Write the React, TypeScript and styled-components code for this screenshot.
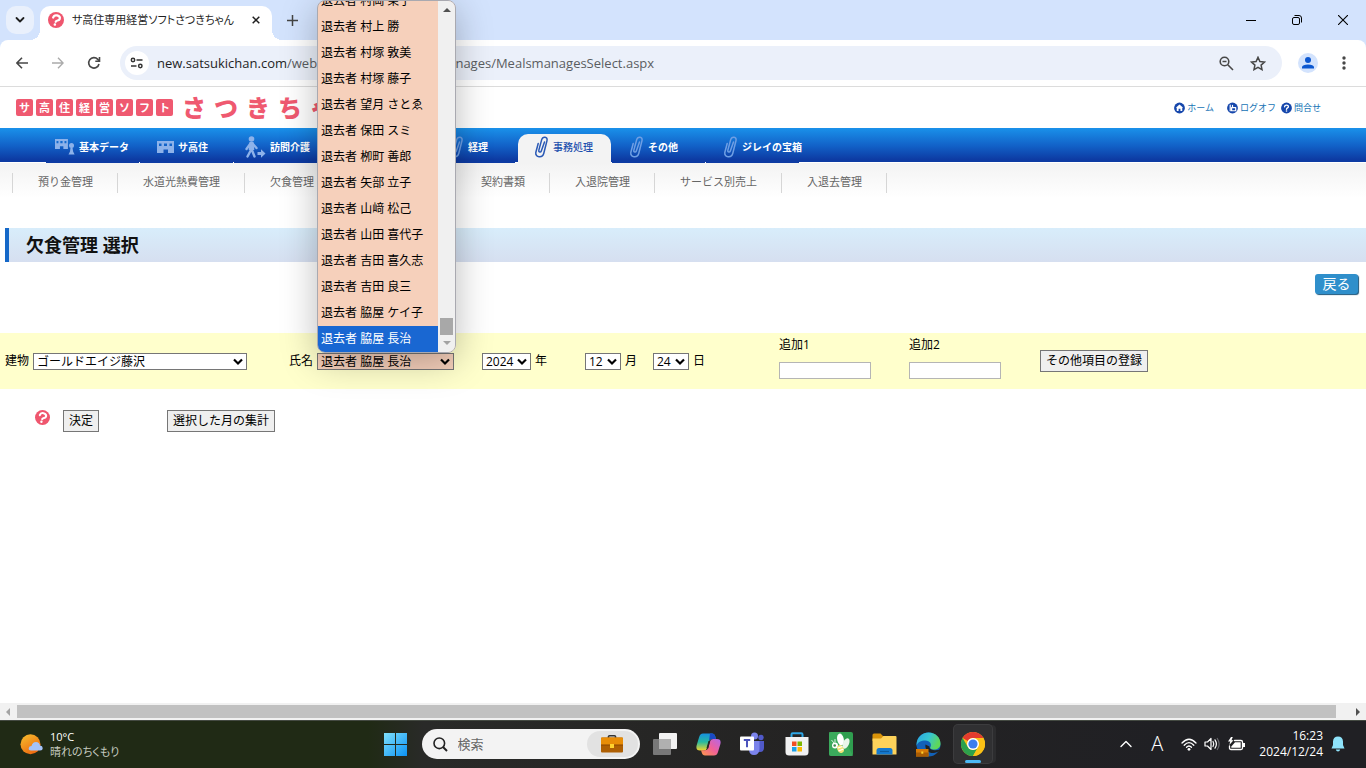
import React from "react";
import styled, { createGlobalStyle, css } from "styled-components";

const FONT = `"Open Sans", "Noto Sans CJK JP", sans-serif`;

const GlobalStyle = createGlobalStyle`
  * { box-sizing: border-box; }
  html, body { margin: 0; padding: 0; overflow: hidden; }
  body { font-family: ${FONT}; font-size: 12px; line-height: 16px; color: #000; background: #fff; }
  button, input, select { font-family: inherit; font-size: 12px; margin: 0; color: inherit; }
  a { text-decoration: none; color: inherit; }
  ul { list-style: none; margin: 0; padding: 0; }
  h1 { margin: 0; }
  svg { display: block; flex: none; }
`;

const Screen = styled.div`
  display: flex;
  flex-direction: column;
  height: 100vh;
  overflow: hidden;
`;

/* ---------- browser chrome ---------- */

const BareButton = styled.button`
  border: 0;
  padding: 0;
  background: none;
  display: flex;
  align-items: center;
  justify-content: center;
  flex: none;
`;

const TabStrip = styled.div`
  display: flex;
  align-items: flex-end;
  height: 40px;
  flex: none;
  padding-left: 6px;
  background: #d3e3fd;
`;

const TabSearch = styled(BareButton)`
  width: 28px;
  height: 28px;
  border-radius: 10px;
  background: #e9f0fc;
  margin-bottom: 6px;
`;

const BrowserTab = styled.div`
  position: relative;
  display: flex;
  align-items: center;
  width: 232px;
  height: 34px;
  margin-left: 6px;
  padding: 0 8px 6px 8px;
  background: #fff;
  border-radius: 10px 10px 0 0;
  &::before,
  &::after {
    content: "";
    position: absolute;
    bottom: 0;
    width: 10px;
    height: 10px;
  }
  &::before {
    left: -10px;
    background: radial-gradient(circle at 0 0, transparent 10px, #fff 10px);
  }
  &::after {
    right: -10px;
    background: radial-gradient(circle at 100% 0, transparent 10px, #fff 10px);
  }
`;

const TabTitle = styled.span`
  flex: 1;
  margin-left: 8px;
  white-space: nowrap;
  overflow: hidden;
  font-size: 11px;
  font-feature-settings: "palt";
  color: #1f1f1f;
`;

const TabAction = styled(BareButton)`
  width: 16px;
  height: 16px;
`;

const NewTab = styled(BareButton)`
  width: 28px;
  height: 28px;
  margin: 0 0 6px 6px;
`;

const WindowControls = styled.div`
  display: flex;
  margin-left: auto;
  align-self: stretch;
`;

const WindowButton = styled(BareButton)`
  width: 46px;
  height: 40px;
`;

const ToolbarBack = styled.div`
  background: #d3e3fd;
  flex: none;
`;

const Toolbar = styled.div`
  display: flex;
  align-items: center;
  height: 47px;
  padding: 0 4px;
  background: #fff;
  border-bottom: 1px solid #dcdcdc;
  border-radius: 8px 8px 0 0;
`;

const ToolButton = styled(BareButton)`
  width: 36px;
  height: 34px;
`;

const AddressBar = styled.div`
  display: flex;
  align-items: center;
  flex: 1;
  height: 34px;
  margin: 0 8px;
  padding: 0 16px 0 5px;
  border-radius: 17px;
  background: #ebf0fa;
  gap: 16px;
`;

const SiteInfo = styled(BareButton)`
  width: 24px;
  height: 24px;
  border-radius: 12px;
  background: #fff;
`;

const Url = styled.div`
  flex: 1;
  margin-left: -8px;
  font-size: 13px;
  color: #5a5d61;
  white-space: nowrap;
  b { font-weight: 400; color: #1f1f1f; }
`;

/* ---------- web page ---------- */

const Page = styled.main`
  flex: 1;
  min-height: 0;
  background: #fff;
`;

const Header = styled.header`
  display: flex;
  align-items: center;
  justify-content: space-between;
  height: 41px;
  padding: 0 45px 0 16px;
`;

const Logo = styled.div`
  display: flex;
  align-items: center;
  gap: 3px;
  color: #ef5970;
`;

const LogoTile = styled.span`
  width: 17px;
  height: 17px;
  border-radius: 2px;
  background: #ef5970;
  color: #fff;
  font: 700 11px/17px ${FONT};
  text-align: center;
`;

const LogoName = styled.span`
  display: flex;
  gap: 8px;
  margin-left: 6px;
  font: 900 24px/36px ${FONT};
`;

const HeaderLinks = styled.nav`
  display: flex;
  gap: 5px;
  font-size: 9px;
  color: #1573b5;
`;

const HeaderLink = styled.a<{ $apart?: boolean }>`
  display: flex;
  align-items: center;
  gap: 2px;
  margin-right: ${(p) => (p.$apart ? 8 : 0)}px;
`;

const MainNav = styled.nav`
  display: flex;
  height: 35px;
  padding-left: 46px;
  background: linear-gradient(#1a91ea, #1262c8 50%, #0d3ba3 90%);
  box-shadow: inset 0 -1px #fff;
`;

const NavItem = styled.a<{ $inset: number; $active?: boolean }>`
  display: flex;
  align-items: center;
  gap: 4px;
  width: 93px;
  margin-right: 1px;
  flex: none;
  padding: 4px 0 0 ${(p) => p.$inset}px;
  border-bottom: 1px solid #0d3ba3;
  font-size: 10px;
  font-weight: 700;
  color: #fff;
  white-space: nowrap;
  ${(p) =>
    p.$active &&
    css`
      margin-top: 6px;
      margin-left: 2px;
      padding-top: 0;
      padding-bottom: 2px;
      background: #f3f3f3;
      border-color: #f3f3f3;
      border-radius: 10px 10px 0 0;
      color: #1c4fae;
      font-weight: 500;
    `}
`;

const SubNav = styled.nav`
  display: flex;
  height: 35px;
  padding: 10px 0 5px 12px;
  background: linear-gradient(#f3f3f3, #fff);
`;

const SubItem = styled.a<{ $blank?: boolean }>`
  border-left: 1px solid #d6d6d6;
  padding: 0 24px 0 25px;
  font-size: 11px;
  line-height: 18px;
  color: #666;
  white-space: nowrap;
  min-width: ${(p) => (p.$blank ? "117px" : "0")};
  &:last-child { border-right: 1px solid #d6d6d6; }
`;

const Title = styled.h1`
  margin: 30px 0 0 5px;
  height: 34px;
  padding-left: 17px;
  border-left: 4px solid #1568c8;
  background: linear-gradient(#d8edfb, #d6dff0);
  font-size: 18px;
  line-height: 34px;
  color: #111;
`;

const BackRow = styled.div`
  display: flex;
  justify-content: flex-end;
  padding: 12px 8px 39px;
`;

const BackButton = styled.button`
  width: 43px;
  height: 20px;
  padding: 0;
  border: 0;
  border-radius: 3px;
  background: #2f8fcb;
  box-shadow: 1px 1px 1px #1b567c;
  color: #fff;
  font-size: 14px;
  line-height: 18px;
`;

const FilterBar = styled.form`
  display: grid;
  grid-template-columns: 284px 193px 103px 68px 126px 130px 131px auto;
  align-items: center;
  height: 56px;
  padding-left: 5px;
  background: #ffffcc;
`;

const Field = styled.div`
  position: relative;
  display: flex;
  align-items: center;
  gap: 4px;
`;

const StackField = styled.div`
  display: flex;
  flex-direction: column;
  align-items: flex-start;
  gap: 9px;
  padding-bottom: 6px;
`;

const SelectBox = styled.span<{ $w: number }>`
  position: relative;
  width: ${(p) => p.$w}px;
  flex: none;
  svg {
    position: absolute;
    right: 4px;
    top: 5px;
    pointer-events: none;
  }
`;

const SelectControl = styled.select<{ $tint?: boolean }>`
  appearance: none;
  display: block;
  width: 100%;
  height: 17px;
  padding: 0 0 0 3px;
  border: 1px solid #767676;
  border-radius: 0;
  background-color: ${(p) => (p.$tint ? "#f6d0bb" : "#fff")};
  line-height: 15px;
`;

const TextInput = styled.input`
  width: 92px;
  height: 17px;
  border: 1px solid #b5b5b5;
  background: #fff;
`;

const PlainButton = styled.button`
  height: 22px;
  padding: 0 5px;
  border: 1px solid #767676;
  border-radius: 0;
  background: #efefef;
  line-height: 18px;
  white-space: nowrap;
  justify-self: start;
`;

const Actions = styled.div`
  display: flex;
  padding: 21px 0 0 35px;
  align-items: flex-start;
`;

const HelpLink = styled.a`
  margin-right: 13px;
`;

const Gap = styled.div`
  width: 68px;
`;

/* anchor at the top left corner of the name field */
const PopupAnchor = styled.div`
  position: absolute;
  left: 0;
  top: 0;
`;

/* open option list lies above the page, ending at the field's top edge */
const Popup = styled.div`
  position: absolute;
  left: 28px;
  bottom: 0;
  z-index: 5;
  display: flex;
  width: 139px;
  height: 353px;
  border: 1px solid #a9a9b0;
  border-radius: 8px;
  overflow: hidden;
  background: #f6d0bb;
`;

const PopupShadow = styled.div`
  position: absolute;
  left: 28px;
  bottom: 0;
  z-index: 4;
  width: 139px;
  height: 353px;
  border-radius: 8px;
  box-shadow: 0 8px 36px rgba(0, 0, 0, 0.27);
  pointer-events: none;
`;

const OptionList = styled.ul`
  flex: 1;
  display: flex;
  flex-direction: column;
  justify-content: flex-end;
  overflow: hidden;
`;

const OptionRow = styled.li<{ $on?: boolean }>`
  flex: none;
  height: 26px;
  padding-left: 3px;
  line-height: 26px;
  white-space: nowrap;
  color: ${(p) => (p.$on ? "#fff" : "#000")};
  background: ${(p) => (p.$on ? "#1967d2" : "transparent")};
`;

const PopupScroll = styled.div`
  display: flex;
  flex-direction: column;
  align-items: center;
  width: 17px;
  padding: 5px 0;
  background: #f0f0f0;
`;

const PopupThumb = styled.div`
  width: 13px;
  height: 17px;
  margin: auto 0 4px;
  background: #a8a8a8;
`;

const PageScroll = styled.div`
  display: grid;
  grid-template-columns: 17px 1fr 30px;
  align-items: center;
  flex: none;
  height: 17px;
  background: #f1f1f1;
`;

const PageThumb = styled.div`
  height: 13px;
  background: #c1c1c1;
`;

const ArrowCell = styled.div<{ $end?: boolean }>`
  display: flex;
  justify-content: ${(p) => (p.$end ? "flex-end" : "center")};
  padding-right: ${(p) => (p.$end ? 4 : 0)}px;
`;

/* ---------- task bar ---------- */

const Taskbar = styled.footer`
  display: grid;
  grid-template-columns: 1fr auto 1fr;
  align-items: center;
  flex: none;
  height: 48px;
  box-shadow: inset 0 1px #444a42;
  background: linear-gradient(90deg, #202a15 0, #202a15 27%, #292a28 31%, #242323 60%, #202024 85%);
  color: #fff;
`;

const Weather = styled.div`
  display: flex;
  align-items: center;
  gap: 7px;
  padding-left: 20px;
  font-size: 11px;
  line-height: 15px;
  font-feature-settings: "palt";
  small { display: block; font-size: 11px; color: #c6cbc0; }
`;

const Apps = styled.div`
  display: flex;
  align-items: center;
  margin-left: 2px;
`;

const AppButton = styled(BareButton)<{ $active?: boolean }>`
  position: relative;
  width: 44px;
  height: 44px;
  ${(p) =>
    p.$active &&
    css`
      width: 38px;
      height: 38px;
      margin: 0 3px;
      border-radius: 4px;
      background: #303032;
      box-shadow: 0 0 0 1px #3c3c3e, 4px 0 0 0 #2c2c2e;
      &::after {
        content: "";
        position: absolute;
        bottom: 0;
        width: 16px;
        height: 3px;
        border-radius: 2px;
        background: #4cb9f5;
      }
    `}
`;

const SearchBox = styled.label`
  display: flex;
  align-items: center;
  width: 218px;
  height: 30px;
  margin: 0 3px 0 4px;
  padding: 0 2px 0 11px;
  border-radius: 15px;
  background: #f3f3f3;
  gap: 10px;
`;

const SearchInput = styled.input`
  flex: 1;
  min-width: 0;
  border: 0;
  padding: 0;
  background: none;
  font-size: 13px;
  outline: none;
  &::placeholder { color: #666; opacity: 1; }
`;

const SearchBadge = styled.span`
  display: flex;
  align-items: center;
  justify-content: center;
  width: 51px;
  height: 26px;
  border-radius: 13px;
  background: #e2e2e2;
`;

const Tray = styled.div`
  display: flex;
  align-items: center;
  justify-content: flex-end;
  padding-right: 21px;
`;

const TrayIcons = styled.div`
  display: flex;
  align-items: center;
  gap: 7px;
  margin: 0 14px 0 18px;
`;

const Ime = styled.span`
  margin-left: 19px;
  font: 300 20px/24px ${FONT};
`;

const Clock = styled.time`
  margin-right: 8px;
  text-align: right;
  font-size: 12px;
  line-height: 16px;
`;

/* ---------- drawings ---------- */

const stroke = { fill: "none", strokeLinecap: "round", strokeLinejoin: "round" } as const;

const HelpIcon = ({ size = 16 }: { size?: number }) => (
  <svg width={size} height={size} viewBox="0 0 16 16">
    <circle cx="8" cy="8" r="8" fill="#ef566e" />
    <g transform="rotate(14 8 8)">
      <path d="M4.600 6.300C4.800 4.200 6.300 3.300 8 3.300c1.900 0 3.400.9 3.400 2.700C11.400 8.200 8.300 8 8.100 9.800" {...stroke} stroke="#fff" strokeWidth="2.200" />
      <circle cx="8" cy="12.700" r="1.300" fill="#fff" />
    </g>
  </svg>
);

const Triangle = ({ dir, color }: { dir: "up" | "down" | "left" | "right"; color: string }) => {
  const d = { up: "M0 6L4 2L8 6Z", down: "M0 2H8L4 6Z", left: "M5 0V8L1 4Z", right: "M2 0V8L6 4Z" }[dir];
  return (
    <svg width="8" height="8" viewBox="0 0 8 8">
      <path d={d} fill={color} />
    </svg>
  );
};

const ClipIcon = ({ color }: { color: string }) => (
  <svg width="15" height="24" viewBox="0 0 15 24">
    <path
      d="M10.500 7L7.300 16c-.6 1.800-2.900 1.200-2.500-.6L7.700 4.600C8.800 1 14 1.600 13 5.600L9.800 18.300C8.600 23.500 1 22.600 1.800 17.500L4.200 8.500"
      {...stroke}
      stroke={color}
      strokeWidth="1.500"
    />
  </svg>
);

const BuildingShape = () => (
  <path d="M0 0H17V12H11V8.500H6.500V12H0ZM2 2.500V5H4.500V2.500ZM7 2.500V5H10V2.500ZM12.500 2.500V5H15V2.500Z" fill="#8db2ea" fillRule="evenodd" />
);

const BuildingIcon = () => (
  <svg width="17" height="12" viewBox="0 0 17 12">
    <BuildingShape />
  </svg>
);

const BuildingPersonIcon = () => (
  <svg width="20" height="16" viewBox="0 0 20 16">
    <g transform="scale(.76 .84)">
      <BuildingShape />
    </g>
    <circle cx="16.500" cy="6.500" r="2.500" fill="#8db2ea" />
    <path d="M15.500 8.500h2l.6 4 1.500 3H13.500l1.500-3Z" fill="#8db2ea" />
  </svg>
);

const WalkerIcon = () => (
  <svg width="21" height="22" viewBox="0 0 21 22">
    <circle cx="6.500" cy="3" r="2.800" fill="#8db2ea" />
    <path d="M6.500 7V13L9.500 20.500M6.500 13L2.500 20.500M5.500 7.500L1.500 13M7.500 7.500L11.500 12" {...stroke} stroke="#8db2ea" strokeWidth="2.400" />
    <path d="M4.500 6h4l.8 8H3.700Z" fill="#8db2ea" />
    <path d="M12.500 16H16V13.300L20.500 17.500L16 21.700V19H12.500Z" fill="#8db2ea" />
  </svg>
);

const LinkIcon = ({ kind }: { kind: "home" | "logoff" | "help" }) => (
  <svg width="11" height="12" viewBox="0 0 12 12">
    <circle cx="6" cy="6" r="5.900" fill="#1647ac" />
    {kind === "home" && <path d="M6 2.200L10 5.800H9V9.300H7V6.800H5V9.300H3V5.800H2Z" fill="#fff" />}
    {kind === "logoff" && (
      <path d="M3.500 2.800V9M6 3.200V5.500M5 5.500H9.500V9H5Z" {...stroke} stroke="#fff" strokeWidth="1.300" />
    )}
    {kind === "help" && (
      <>
        <path d="M3.900 4.700C4 2.200 8.100 2.200 8.100 4.600C8.100 6 6 5.900 6 7.400" {...stroke} stroke="#fff" strokeWidth="1.500" />
        <circle cx="6" cy="9.300" r=".9" fill="#fff" />
      </>
    )}
  </svg>
);

const Briefcase = () => (
  <svg width="22" height="18" viewBox="0 0 22 18">
    <path d="M7.500 3V1.500Q7.500.8 8.500.8H13.500Q14.500.8 14.500 1.500V3" fill="none" stroke="#333" strokeWidth="1.600" />
    <rect y="2.500" width="22" height="15" rx="1" fill="#ae5f03" />
    <path d="M0 3.500Q0 2.500 1 2.500H21Q22 2.500 22 3.500V10H0Z" fill="#e88d07" />
    <rect y="9.500" width="22" height="1" fill="#8a4700" />
    <rect x="9" y="9" width="4" height="4" fill="#ffd22e" />
  </svg>
);

const TeamsIcon = () => (
  <svg width="25" height="24" viewBox="0 0 25 24">
    <circle cx="21" cy="5.500" r="2.700" fill="#5059c9" />
    <circle cx="14.500" cy="4" r="3.500" fill="#7b83eb" />
    <path d="M17 9H24V16Q24 20 20 20H17Z" fill="#5059c9" />
    <path d="M9 9H19.500V17Q19 23 14 23Q9 23 9 17Z" fill="#7b83eb" />
    <rect y="4.500" width="14" height="14" rx="1" fill="#fff" />
    <path d="M3.800 8H10.200M7 8V15.300" stroke="#4b53bc" strokeWidth="2" fill="none" />
  </svg>
);

const CopilotIcon = () => (
  <svg width="25" height="23" viewBox="0 0 25 23">
    <defs>
      <linearGradient id="cpA" x1="0" y1="0" x2="0" y2="1">
        <stop offset="0" stopColor="#1690e0" />
        <stop offset=".5" stopColor="#27b9a0" />
        <stop offset="1" stopColor="#f4d42c" />
      </linearGradient>
      <linearGradient id="cpB" x1="1" y1="0" x2="0" y2="1">
        <stop offset="0" stopColor="#b467e8" />
        <stop offset=".5" stopColor="#f0609a" />
        <stop offset="1" stopColor="#ff9a45" />
      </linearGradient>
    </defs>
    <path d="M7 .5H16Q18.500 .5 19.300 3.500L20 6H16Q13.500 6 12.800 8.500L11 15Q10.300 17.500 8 17.500H4Q-.5 17.500 .6 12.500L3 4.500Q4 .5 7 .5Z" fill="url(#cpA)" />
    <path d="M14 .5H16Q18.500 .5 19.300 3.500L20 6H16Q14 6 13 8Z" fill="#1b49c4" />
    <path d="M18 22.500H9Q6.500 22.500 5.700 19.500L5 17.300H9Q11.500 17.300 12.200 15L14 8.500Q14.700 6 17 6H21Q25.500 6 24.400 11L22 19Q21 22.500 18 22.500Z" fill="url(#cpB)" />
    <path d="M10.500 15L12.500 8H14.200L12.200 15.500Z" fill="#262625" />
  </svg>
);

const StoreIcon = () => (
  <svg width="24" height="24" viewBox="0 0 24 24">
    <path d="M6.500 6V2.500Q6.500 1.300 7.700 1.300H16.300Q17.500 1.300 17.500 2.500V6" fill="none" stroke="#2ea7e6" strokeWidth="2" />
    <path d="M.5 5H23.500V20Q23.500 23.500 20 23.500H4Q.5 23.500 .5 20Z" fill="#f1f1f2" />
    <path d="M7 9.500H11.500V14H7Z" fill="#f04e23" />
    <path d="M12.500 9.500H17V14H12.500Z" fill="#7db700" />
    <path d="M7 15H11.500V19.500H7Z" fill="#1a9fe8" />
    <path d="M12.500 15H17V19.500H12.500Z" fill="#fdb900" />
  </svg>
);

const BeeIcon = () => (
  <svg width="24" height="24" viewBox="0 0 24 24">
    <rect width="24" height="24" rx="2" fill="#2f9e4f" />
    <path d="M0 0H12L24 24H2Q0 24 0 22Z" fill="#45b366" opacity=".6" />
    <ellipse cx="11.500" cy="7.500" rx="3.300" ry="6" fill="#fff" transform="rotate(-12 11.500 7.500)" />
    <ellipse cx="17" cy="11.500" rx="3" ry="5.500" fill="#e9f5ea" transform="rotate(25 17 11.500)" />
    <circle cx="6" cy="13.500" r="3" fill="#fff" />
    <circle cx="5.700" cy="13.500" r="1.300" fill="#3a8a4c" />
    <ellipse cx="11.500" cy="17" rx="3.200" ry="4" fill="#f6e27a" transform="rotate(-25 11.500 17)" />
    <path d="M8.800 16L13.500 14.500M9.500 19L14.500 17" stroke="#fff" strokeWidth="1.300" />
    <path d="M2.500 8L5 11M6 7V10.500" stroke="#d8f0dc" strokeWidth="1" />
  </svg>
);

const FolderIcon = () => (
  <svg width="25" height="22" viewBox="0 0 25 22">
    <path d="M.5 2Q.5 .5 2 .5H8.500L11 3H15V8H.5Z" fill="#d99309" />
    <path d="M.5 5.500H9L11.500 3H23.500Q24.500 3 24.500 4V21.500H.5Z" fill="#fdd25a" />
    <path d="M4.500 21.500V17.500Q4.500 15 7 15H18Q20.500 15 20.500 17.500V21.500Z" fill="#1479cf" />
    <path d="M8 18.500H17" stroke="#0c5a9f" strokeWidth="1.200" />
  </svg>
);

const EdgeIcon = () => (
  <svg width="25" height="25" viewBox="0 0 25 25">
    <defs>
      <linearGradient id="edA" x1="0" y1="0" x2="1" y2=".4">
        <stop offset="0" stopColor="#2aa5e2" />
        <stop offset=".55" stopColor="#37c6d0" />
        <stop offset="1" stopColor="#5fd758" />
      </linearGradient>
    </defs>
    <circle cx="12.500" cy="12.500" r="12" fill="#1261b8" />
    <path d="M.6 11.500C1.500 4.500 6.500 .5 12.500 .5C20 .5 24.500 6 24.500 11.500C24.500 15.500 21.500 17.500 18 17.500C15 17.500 13.500 16.500 14.500 15C16 12.500 14 8.500 9.500 8.500C5 8.500 1.500 10 .6 14Z" fill="url(#edA)" />
    <path d="M9.500 12.500C8.500 18 13 21.500 18 21C20.500 20.700 23 19.500 24 17.500C20 19 13 18.500 13.500 14.500Z" fill="#202222" />
    <path d="M0 17H12.500V24.500H0Z" fill="#d67a06" />
    <path d="M0 20.500H12.500V24.500H0Z" fill="#a85c04" />
    <rect x="5.300" y="19.500" width="2" height="2.200" fill="#ffd22e" />
  </svg>
);

const ChromeIcon = () => (
  <svg width="24" height="24" viewBox="0 0 24 24">
    <circle cx="12" cy="12" r="12" fill="#fbc116" />
    <path d="M1.600 6A12 12 0 0 1 22.400 6H12A6 6 0 0 0 6.800 9Z" fill="#e33b2e" />
    <path d="M1.600 6A12 12 0 0 0 12 24L17.200 15A6 6 0 0 1 6.800 15Z" fill="#2da14c" />
    <path d="M12 6H22.400A12 12 0 0 1 12 24L17.200 15A6 6 0 0 0 12 6Z" fill="#fbc116" />
    <circle cx="12" cy="12" r="6" fill="#fff" />
    <circle cx="12" cy="12" r="4.600" fill="#3b7ded" />
  </svg>
);

const WindowsIcon = () => (
  <svg width="23" height="23" viewBox="0 0 23 23">
    <defs>
      <linearGradient id="win" x1="0" y1="0" x2="1" y2="1">
        <stop offset="0" stopColor="#7fe0fb" />
        <stop offset="1" stopColor="#0b92f5" />
      </linearGradient>
    </defs>
    <path d="M0 0H11V11H0ZM12 0H23V11H12ZM0 12H11V23H0ZM12 12H23V23H12Z" fill="url(#win)" />
  </svg>
);

const TaskViewIcon = () => (
  <svg width="24" height="22" viewBox="0 0 24 22">
    <rect x="6" width="18" height="16" rx="1" fill="#f2f2f2" />
    <rect y="6" width="18" height="16" rx="1" fill="#787878" />
    <rect x="6" y="6" width="12" height="10" fill="#b0b0b0" />
  </svg>
);

const WeatherIcon = () => (
  <svg width="23" height="21" viewBox="0 0 23 21">
    <defs>
      <linearGradient id="sun" x1="0" y1="0" x2=".6" y2="1">
        <stop offset="0" stopColor="#f6c02f" />
        <stop offset="1" stopColor="#ee6a10" />
      </linearGradient>
    </defs>
    <circle cx="10.500" cy="10.300" r="10" fill="url(#sun)" />
    <path d="M11 16.500Q8.500 16.500 8.700 14.300Q9 12 11.500 12Q12.500 8 16 8Q19.500 8 20 11.500Q22.700 11.800 22.700 14Q22.700 16.500 20 16.500Z" fill="#a5c3fa" />
  </svg>
);

/* ---------- data ---------- */

const residents = [
  "村岡 榮子", "村上 勝", "村塚 敦美", "村塚 藤子", "望月 さとゑ", "保田 スミ", "栁町 善郎",
  "矢部 立子", "山﨑 松己", "山田 喜代子", "吉田 喜久志", "吉田 良三", "脇屋 ケイ子", "脇屋 長治",
];

const navFaded = "#6f9fe4";

const navItems: { label: string; inset: number; icon?: React.ReactNode; active?: boolean }[] = [
  { label: "基本データ", inset: 9, icon: <BuildingPersonIcon /> },
  { label: "サ高住", inset: 17, icon: <BuildingIcon /> },
  { label: "訪問介護", inset: 11, icon: <WalkerIcon /> },
  { label: "", inset: 0 },
  { label: "経理", inset: 27, icon: <ClipIcon color={navFaded} /> },
  { label: "事務処理", inset: 16, icon: <ClipIcon color="#2a59b5" />, active: true },
  { label: "その他", inset: 17, icon: <ClipIcon color={navFaded} /> },
  { label: "ジレイの宝箱", inset: 17, icon: <ClipIcon color={navFaded} /> },
];

const subItems = ["預り金管理", "水道光熱費管理", "欠食管理", "", "契約書類", "入退院管理", "サービス別売上", "入退去管理"];

function BrowserChrome() {
  return (
    <>
      <TabStrip>
        <TabSearch aria-label="タブを検索">
          <svg width="10" height="10" viewBox="0 0 10 10"><path d="M1.500 3L5 6.500L8.500 3" {...stroke} stroke="#1f1f1f" strokeWidth="1.800" /></svg>
        </TabSearch>
        <BrowserTab>
          <HelpIcon />
          <TabTitle>サ高住専用経営ソフトさつきちゃん</TabTitle>
          <TabAction aria-label="タブを閉じる">
            <svg width="8" height="8" viewBox="0 0 8 8"><path d="M.7.7L7.300 7.300M7.300.7L.7 7.300" stroke="#1f1f1f" strokeWidth="1.500" /></svg>
          </TabAction>
        </BrowserTab>
        <NewTab aria-label="新しいタブ">
          <svg width="11" height="11" viewBox="0 0 11 11"><path d="M5.500 0V11M0 5.500H11" stroke="#444" strokeWidth="1.500" /></svg>
        </NewTab>
        <WindowControls>
          <WindowButton aria-label="最小化">
            <svg width="10" height="11" viewBox="0 0 10 11"><path d="M0 5.500H10" stroke="#000" /></svg>
          </WindowButton>
          <WindowButton aria-label="元に戻す">
            <svg width="10" height="10" viewBox="0 0 10 10"><rect x=".5" y="2.500" width="7" height="7" rx="1.500" fill="none" stroke="#000" /><path d="M2.500.5H7Q9.500.5 9.500 3V7.500" fill="none" stroke="#000" /></svg>
          </WindowButton>
          <WindowButton aria-label="閉じる">
            <svg width="10" height="10" viewBox="0 0 10 10"><path d="M0 0L10 10M10 0L0 10" stroke="#000" strokeWidth="1.100" /></svg>
          </WindowButton>
        </WindowControls>
      </TabStrip>
      <ToolbarBack>
        <Toolbar>
          <ToolButton aria-label="戻る">
            <svg width="12" height="12" viewBox="0 0 12 12"><path d="M12 6H1M6 .8L.9 6L6 11.200" fill="none" stroke="#474747" strokeWidth="1.600" /></svg>
          </ToolButton>
          <ToolButton aria-label="進む">
            <svg width="12" height="12" viewBox="0 0 12 12"><path d="M0 6H11M6 .8L11.100 6L6 11.200" fill="none" stroke="#ababab" strokeWidth="1.400" /></svg>
          </ToolButton>
          <ToolButton aria-label="再読み込み">
            <svg width="14" height="14" viewBox="0 0 14 14"><path d="M12 8A5.200 5.200 0 1 1 10.800 3.400L12 4.700" fill="none" stroke="#474747" strokeWidth="1.600" /><path d="M12.500 1V5.200H8.300" fill="none" stroke="#474747" strokeWidth="1.600" /></svg>
          </ToolButton>
          <AddressBar>
            <SiteInfo aria-label="サイト情報">
              <svg width="14" height="12" viewBox="0 0 14 12">
                <g fill="none" stroke="#333" strokeWidth="1.500"><circle cx="3" cy="3" r="1.700" /><path d="M6.500 3H12.500M1 9H6.500" /><circle cx="10.300" cy="9" r="1.700" /></g>
              </svg>
            </SiteInfo>
            <Url><b>new.satsukichan.com</b>/web/OfficeWorks/Mealsmanages/MealsmanagesSelect.aspx</Url>
            <BareButton aria-label="ズーム">
              <svg width="15" height="15" viewBox="0 0 15 15"><g fill="none" stroke="#474747" strokeWidth="1.600"><circle cx="5.500" cy="5.500" r="4.300" /><path d="M8.800 8.800L14 14M3.500 5.500H7.500" /></g></svg>
            </BareButton>
            <BareButton aria-label="ブックマーク">
              <svg width="16" height="15" viewBox="0 0 16 15"><path d="M8 1.300L9.900 5.500L14.500 6L11.100 9.100L12 13.600L8 11.300L4 13.600L4.900 9.100L1.500 6L6.100 5.500Z" fill="none" stroke="#474747" strokeWidth="1.500" /></svg>
            </BareButton>
          </AddressBar>
          <ToolButton aria-label="プロフィール">
            <svg width="20" height="20" viewBox="0 0 20 20"><circle cx="10" cy="10" r="10" fill="#d3e3fd" /><circle cx="10" cy="7" r="3" fill="#0b57d0" /><path d="M4 15.500V14Q4.500 11.500 10 11.500T16 14V15.500Z" fill="#0b57d0" /></svg>
          </ToolButton>
          <ToolButton aria-label="メニュー">
            <svg width="4" height="14" viewBox="0 0 4 14"><g fill="#474747"><circle cx="2" cy="2" r="1.700" /><circle cx="2" cy="7" r="1.700" /><circle cx="2" cy="12" r="1.700" /></g></svg>
          </ToolButton>
        </Toolbar>
      </ToolbarBack>
    </>
  );
}

function Select({ id, width, tint, value }: { id: string; width: number; tint?: boolean; value: string }) {
  return (
    <SelectBox $w={width}>
      <SelectControl id={id} $tint={tint}><option>{value}</option></SelectControl>
      <svg width="10" height="8" viewBox="0 0 10 8"><path d="M1 1.500L5 5.500L9 1.500" fill="none" stroke="#000" strokeWidth="2.200" /></svg>
    </SelectBox>
  );
}

function Filters() {
  const last = residents.length - 1;
  return (
    <FilterBar>
      <Field>
        <label htmlFor="building">建物</label>
        <Select id="building" width={214} value="ゴールドエイジ藤沢" />
      </Field>
      <Field>
        <label htmlFor="resident">氏名</label>
        <Select id="resident" width={137} tint value="退去者 脇屋 長治" />
        <PopupAnchor>
          <PopupShadow />
          <Popup>
            <OptionList role="listbox" aria-label="氏名">
              {residents.map((name, i) => (
                <OptionRow key={name} role="option" aria-selected={i === last} $on={i === last}>
                  退去者 {name}
                </OptionRow>
              ))}
            </OptionList>
            <PopupScroll>
              <Triangle dir="up" color="#505050" />
              <PopupThumb />
              <Triangle dir="down" color="#a3a3a3" />
            </PopupScroll>
          </Popup>
        </PopupAnchor>
      </Field>
      <Field>
        <Select id="year" width={49} value="2024" />
        <label htmlFor="year">年</label>
      </Field>
      <Field>
        <Select id="month" width={36} value="12" />
        <label htmlFor="month">月</label>
      </Field>
      <Field>
        <Select id="day" width={36} value="24" />
        <label htmlFor="day">日</label>
      </Field>
      <StackField>
        <label htmlFor="extra1">追加1</label>
        <TextInput id="extra1" />
      </StackField>
      <StackField>
        <label htmlFor="extra2">追加2</label>
        <TextInput id="extra2" />
      </StackField>
      <PlainButton type="button">その他項目の登録</PlainButton>
    </FilterBar>
  );
}

function SystemBar() {
  return (
    <Taskbar>
      <Weather>
        <WeatherIcon />
        <div>10°C<small>晴れのちくもり</small></div>
      </Weather>
      <Apps>
        <AppButton aria-label="スタート"><WindowsIcon /></AppButton>
        <SearchBox>
          <svg width="15" height="15" viewBox="0 0 15 15"><circle cx="6.300" cy="6.300" r="5.300" fill="none" stroke="#222" strokeWidth="1.600" /><path d="M10 10L14 14" stroke="#222" strokeWidth="2" /></svg>
          <SearchInput aria-label="検索" placeholder="検索" />
          <SearchBadge><Briefcase /></SearchBadge>
        </SearchBox>
        <AppButton aria-label="タスク ビュー"><TaskViewIcon /></AppButton>
        <AppButton aria-label="Copilot"><CopilotIcon /></AppButton>
        <AppButton aria-label="Teams"><TeamsIcon /></AppButton>
        <AppButton aria-label="Store"><StoreIcon /></AppButton>
        <AppButton aria-label="介護"><BeeIcon /></AppButton>
        <AppButton aria-label="エクスプローラー"><FolderIcon /></AppButton>
        <AppButton aria-label="Edge"><EdgeIcon /></AppButton>
        <AppButton aria-label="Chrome" $active><ChromeIcon /></AppButton>
      </Apps>
      <Tray>
        <svg width="12" height="8" viewBox="0 0 12 8"><path d="M1 6.500L6 1.500L11 6.500" {...stroke} stroke="#fff" strokeWidth="1.400" /></svg>
        <Ime>A</Ime>
        <TrayIcons>
          <svg width="16" height="13" viewBox="0 0 16 13">
            <g {...stroke} stroke="#fff" strokeWidth="1.300"><path d="M1 5Q8-2.500 15 5M3.200 7.200Q8 2 12.800 7.200M5.500 9.300Q8 6.700 10.500 9.300" /></g>
            <circle cx="8" cy="11.300" r="1.400" fill="#fff" />
          </svg>
          <svg width="17" height="14" viewBox="0 0 17 14">
            <path d="M1 5H3.500L7 1.500V12.500L3.500 9H1Z" {...stroke} stroke="#fff" strokeWidth="1.200" />
            <path d="M9 4.500Q10.500 7 9 9.500M11 2.800Q13.800 7 11 11.200" {...stroke} stroke="#fff" strokeWidth="1.200" />
            <path d="M13.300 1.500Q17 7 13.300 12.500" {...stroke} stroke="#68686c" strokeWidth="1.200" />
          </svg>
          <svg width="17" height="14" viewBox="0 0 17 14">
            <path d="M6.500 3.500H13Q14.500 3.500 14.500 5V11Q14.500 12.500 13 12.500H3Q1.500 12.500 1.500 11V9" {...stroke} stroke="#fff" strokeWidth="1.300" />
            <path d="M7 5.300H12.700V10.700H3.300V9.500Z" fill="#fff" />
            <rect x="15" y="6" width="2" height="4" fill="#fff" />
            <path d="M3 0L0 4.500H2.200L1.300 8L5.500 3.200H3.500L4.800 0Z" fill="#fff" />
          </svg>
        </TrayIcons>
        <Clock>16:23<br />2024/12/24</Clock>
        <svg width="14" height="16" viewBox="0 0 14 16">
          <path d="M7 .5Q11.700 .5 12 5.500V9L13.500 12.500H.5L2 9V5.500Q2.300 .5 7 .5Z" fill="#8fe3fb" />
          <path d="M4.800 13.500H9.200Q8.700 15.600 7 15.600T4.800 13.500Z" fill="#8fe3fb" />
        </svg>
      </Tray>
    </Taskbar>
  );
}

export default function App() {
  return (
    <Screen>
      <GlobalStyle />
      <BrowserChrome />
      <Page>
        <Header>
          <Logo>
            {[..."サ高住経営ソフト"].map((c, i) => <LogoTile key={i}>{c}</LogoTile>)}
            <LogoName>{[..."さつきちゃ"].map((c, i) => <span key={i}>{c}</span>)}</LogoName>
          </Logo>
          <HeaderLinks>
            <HeaderLink href="#" $apart><LinkIcon kind="home" />ホーム</HeaderLink>
            <HeaderLink href="#"><LinkIcon kind="logoff" />ログオフ</HeaderLink>
            <HeaderLink href="#"><LinkIcon kind="help" />問合せ</HeaderLink>
          </HeaderLinks>
        </Header>
        <MainNav>
          {navItems.map((n, i) => (
            <NavItem key={i} href="#" $inset={n.inset} $active={n.active}>{n.icon}{n.label}</NavItem>
          ))}
        </MainNav>
        <SubNav>
          {subItems.map((s, i) => <SubItem key={i} href="#" $blank={!s}>{s}</SubItem>)}
        </SubNav>
        <Title>欠食管理 選択</Title>
        <BackRow><BackButton>戻る</BackButton></BackRow>
        <Filters />
        <Actions>
          <HelpLink href="#" aria-label="ヘルプ"><HelpIcon size={15} /></HelpLink>
          <PlainButton>決定</PlainButton>
          <Gap />
          <PlainButton>選択した月の集計</PlainButton>
        </Actions>
      </Page>
      <PageScroll>
        <ArrowCell><Triangle dir="left" color="#a3a3a3" /></ArrowCell>
        <PageThumb />
        <ArrowCell $end><Triangle dir="right" color="#505050" /></ArrowCell>
      </PageScroll>
      <SystemBar />
    </Screen>
  );
}
